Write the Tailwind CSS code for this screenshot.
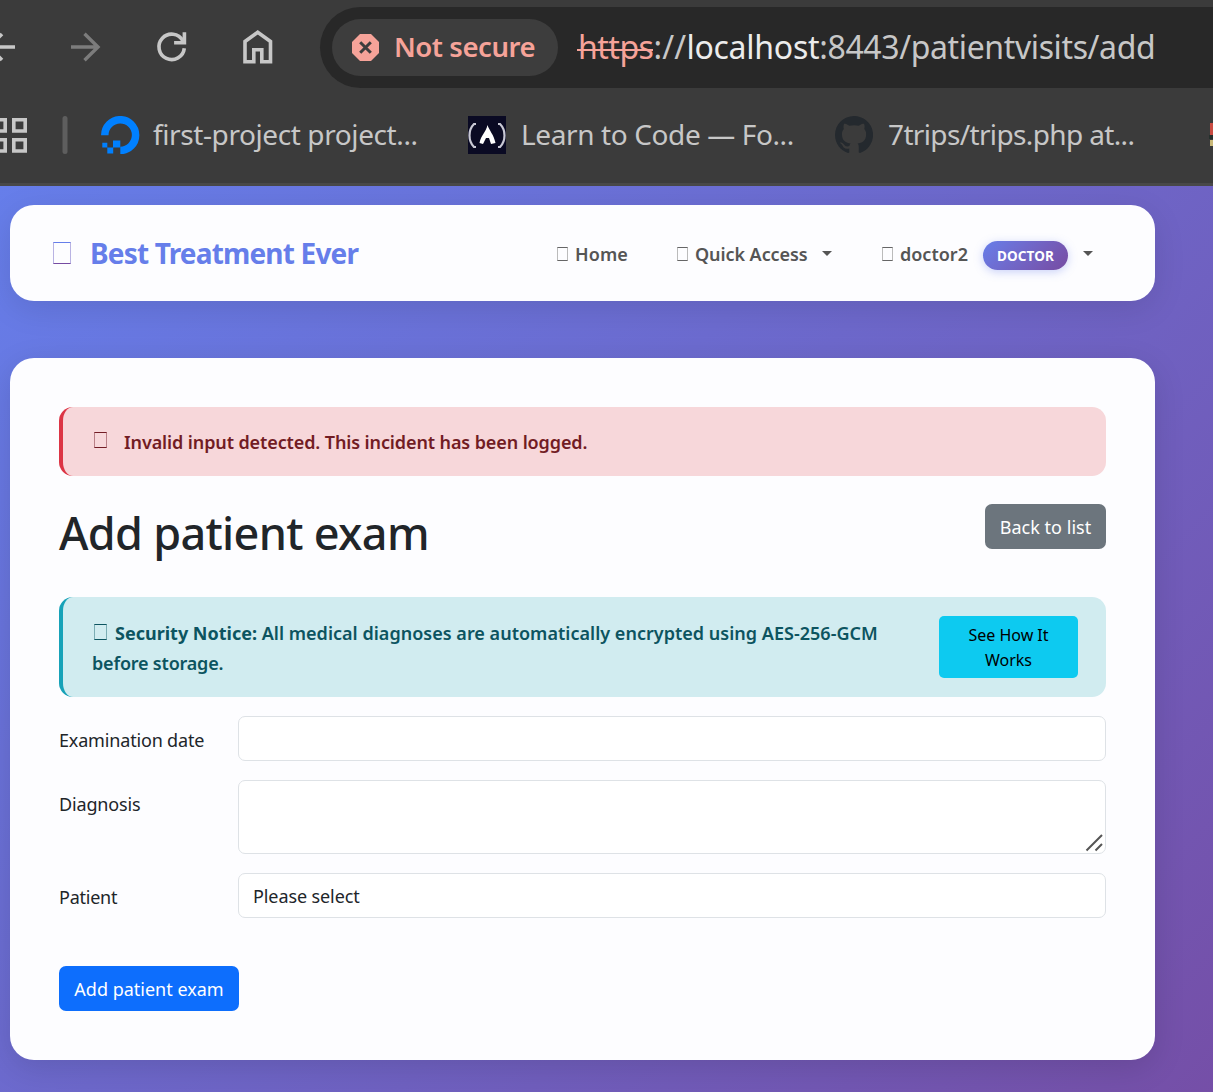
<!DOCTYPE html>
<html lang="en">
<head>
<meta charset="utf-8">
<title>Add patient exam</title>
<script src="https://cdn.jsdelivr.net/npm/@tailwindcss/browser@4"></script>
</head>
<body class="flex h-[1092px] w-[1213px] flex-col overflow-hidden whitespace-nowrap font-['Noto_Sans','Open_Sans',sans-serif] text-[18px] text-[#212529]">

<!-- Browser toolbar -->
<header class="h-[186px] shrink-0 overflow-hidden border-b-[3px] border-[#484848] bg-[#3b3b3b] text-[#c7c7c7]">
  <div class="flex h-[95px] pt-[7px]">
    <svg class="h-[81px] w-[320px] shrink-0" viewBox="0 7 320 81" fill="none" stroke="#c7c7c7" stroke-width="3.6">
      <path d="M-12 47H15M2 34l-13 13 13 13"/>
      <path stroke="#7c7c7c" stroke-width="3.4" d="M71 47h27M84.500 33.700L98 47 84.500 60.300"/>
      <path d="M184.300 48.200A12.700 12.700 0 1 1 182.800 40.700L184 42.500"/>
      <path stroke-width="3.600" d="M184.400 32.200v10.500h-10.300"/>
      <path d="M245 61.800V41.500L257.700 32.300 270.500 41.500V61.800H261.800V49.800H253.800V61.800Z"/>
    </svg>
    <div class="flex h-[81px] flex-1 items-center rounded-l-full bg-[#282828] pl-3">
      <div class="flex h-[57px] w-[226px] items-center rounded-full bg-[#3d3d3d] pl-5">
        <svg class="size-[27px]" viewBox="0 0 27 27"><path fill="#f6a399" d="M8 0H19L27 8V19L19 27H8L0 19V8Z"/><path d="M8.200 8.200l10.600 10.600M18.800 8.200L8.200 18.800" stroke="#3d3d3d" stroke-width="3"/></svg>
        <span class="relative -top-px ml-[15px] text-[27.5px] font-semibold tracking-[-0.45px] text-[#f6a399]">Not secure</span>
      </div>
      <div class="relative -top-px ml-5 flex text-[32px]">
        <span class="relative tracking-[-0.5px] text-[#f6a399]">https<i class="absolute -left-px right-0 top-[26px] h-[2px] bg-[#f6a399]"></i></span><span class="tracking-[0.2px]">://</span><span class="tracking-[-0.25px] text-[#ececec]">localhost</span><span class="tracking-[-0.38px]">:8443/patientvisits/add</span>
      </div>
    </div>
  </div>
  <div class="flex h-[80px] items-center text-[28px]">
    <svg class="h-[38px] w-[153px] shrink-0" viewBox="0 116 153 38">
      <path fill="none" stroke="#c7c7c7" stroke-width="3.600" d="M-6 119.800H5.200V131H-6ZM13.800 119.800H25.200V131H13.800ZM-6 139.800H5.200V151H-6ZM13.800 139.800H25.200V151H13.800Z"/>
      <rect x="62.500" y="116" width="5" height="38" rx="2.500" fill="#5e5e5e"/>
      <path fill="none" stroke="#0080ff" stroke-width="7.500" d="M104.800 135.300A15.400 15.400 0 1 1 120.300 150.500"/>
      <path fill="#0080ff" d="M113 140.500h7.300v7H113ZM107.300 147.500h5.900v6h-5.900ZM102.300 142.800h5v4.700h-5Z"/>
    </svg>
    <span class="relative -top-px w-[315px] tracking-[-0.4px]">first-project project...</span>
    <svg class="size-[38px] shrink-0" viewBox="0 0 38 38" fill="none" stroke="#c8c8d4"><path fill="#0a0a23" stroke="none" d="M0 0h38v38H0z"/><path stroke-width="2.200" d="M8 8H6C0 14 0 25 6 31H8M30 8H32C38 14 38 25 32 31H30"/><path fill="#fff" stroke="none" d="M19.500 9C21 14 26 19 27.500 27L23 28 21 22H18L15 28 11.500 27C13 19 18 16 19.500 9Z"/></svg>
    <span class="relative -top-px ml-[15px] w-[314px] tracking-[-0.38px]">Learn to Code — Fo...</span>
    <svg class="size-[38px] shrink-0" viewBox="0 0 16 16"><path fill="#24292e" d="M8 0C3.580 0 0 3.580 0 8c0 3.540 2.290 6.530 5.470 7.590.4.070.55-.17.55-.38 0-.19-.01-.82-.01-1.490-2.010.37-2.530-.49-2.690-.94-.09-.23-.48-.94-.82-1.130-.28-.15-.68-.52-.01-.53.63-.01 1.080.58 1.230.82.72 1.210 1.870.87 2.330.66.070-.52.28-.87.51-1.070-1.780-.2-3.640-.89-3.640-3.950 0-.87.31-1.590.82-2.150-.08-.2-.36-1.020.08-2.120 0 0 .67-.21 2.200.82.64-.18 1.320-.27 2-.27s1.360.09 2 .27c1.530-1.040 2.200-.82 2.200-.82.44 1.100.16 1.920.08 2.120.51.56.82 1.270.82 2.150 0 3.070-1.870 3.750-3.650 3.950.29.25.54.73.54 1.480 0 1.070-.01 1.930-.01 2.200 0 .21.15.46.55.38A8 8 0 0 0 8 0Z"/></svg>
    <span class="relative -top-px ml-[15px] w-[320px] shrink-0 tracking-[-0.64px]">7trips/trips.php at...</span>
    <svg class="h-[38px] w-[5px] shrink-0" viewBox="0 0 5 38"><path fill="#c94c42" d="M2 7h3v12H2z"/><path fill="#25302d" d="M1 19h4v4H1z"/><path fill="#c9b878" d="M2 24h3v6H2z"/></svg>
  </div>
</header>

<!-- Page -->
<main class="flex-1 bg-[linear-gradient(135deg,#667eea_0%,#764ba2_108%)] pl-[10px] pt-[19px]">
  <nav class="flex h-[96px] w-[1145px] items-center rounded-3xl bg-[#fdfdff] pl-[43px] font-semibold text-[#555] shadow-[0_8px_32px_rgba(0,0,0,0.1)]">
    <i class="relative h-[22px] w-[18px] border border-x-[#b9b3e3] border-t-[#667eea] border-b-[#764ba2]"></i>
    <span class="ml-[19px] w-[467px] text-[28px] font-bold tracking-[-0.82px] text-[#667eea]">Best Treatment Ever</span>
    <i class="relative top-px h-[14px] w-[11px] border border-x-[#bbb] border-y-[#666]"></i>
    <span class="relative top-px ml-[7px] w-[102px] tracking-[0.1px]">Home</span>
    <i class="relative top-px h-[14px] w-[11px] border border-x-[#bbb] border-y-[#666]"></i>
    <span class="relative top-px ml-[7px] w-[127px] tracking-[-0.07px]">Quick Access</span>
    <svg class="h-[5px] w-[10px]" viewBox="0 0 10 5"><path fill="#555" d="M0 0h10L5 5z"/></svg>
    <i class="relative top-px ml-[50px] h-[14px] w-[11px] border border-x-[#bbb] border-y-[#666]"></i>
    <span class="relative top-px ml-[7px] w-[83px]">doctor2</span>
    <span class="relative top-[2px] flex h-[29px] w-[85px] items-center justify-center rounded-full bg-linear-135 from-[#667eea] to-[#764ba2] pt-[2px] text-[13.5px] font-bold tracking-[0.15px] text-white shadow-[0_2px_10px_rgba(102,126,234,0.35)]">DOCTOR</span>
    <svg class="ml-[15px] h-[5px] w-[10px]" viewBox="0 0 10 5"><path fill="#555" d="M0 0h10L5 5z"/></svg>
  </nav>

  <section class="mt-[57px] h-[702px] w-[1145px] rounded-3xl bg-[#fdfdff] px-[49px] pt-[49px] shadow-[0_8px_32px_rgba(0,0,0,0.12)]">
    <div class="flex h-[69px] items-center rounded-[14px] border-l-4 border-[#dc3545] bg-[#f7d7da] pl-[31px] font-semibold text-[#721c24]">
      <i class="relative -top-[2px] h-[16px] w-[13px] border border-x-[#b98087] border-y-[#721c24]"></i>
      <span class="relative top-px ml-[17px] tracking-[-0.11px]">Invalid input detected. This incident has been logged.</span>
    </div>

    <div class="mt-7 flex justify-between">
      <h1 class="text-[45px] font-medium leading-[58px] tracking-[-0.68px]">Add patient exam</h1>
      <button class="h-[45px] w-[121px] rounded-[7px] bg-[#6c757d] pt-[2px] tracking-[0.02px] text-white">Back to list</button>
    </div>

    <div class="mt-[35px] flex h-[100px] items-center rounded-[14px] border-l-4 border-[#17a2b8] bg-[#d1ecf0] pl-[29px] pr-7 font-semibold leading-[30px] text-[#0c5460]">
      <p class="relative top-px flex-1"><i class="relative mr-[8px] ml-[2px] inline-block h-[16px] w-[13px] border border-x-[#7badb4] border-y-[#0c5460]"></i><b class="font-bold">Security Notice:</b> <span class="tracking-[0.02px]">All medical diagnoses are automatically encrypted using AES-256-GCM</span><br><span class="tracking-[-0.2px]">before storage.</span></p>
      <button class="h-[62px] w-[139px] rounded-[5px] bg-[#0dcaf0] pt-[2px] text-[16px] font-normal leading-[25px] text-black">See How It<br>Works</button>
    </div>

    <form class="mt-[19px] grid grid-cols-[179px_1fr] gap-y-[19px]">
      <label class="pt-px leading-[44px] tracking-[-0.17px]"><span class="relative top-px">Examination date</span></label>
      <div class="h-[45px] rounded-[7px] border border-[#dee2e6] bg-white"></div>
      <label class="leading-[48px] tracking-[-0.15px]">Diagnosis</label>
      <div class="flex h-[74px] items-end justify-end rounded-[7px] border border-[#dee2e6] bg-white pr-[2px] pb-px">
        <svg class="size-[18px]" viewBox="0 0 18 18" fill="none" stroke="#555" stroke-width="2"><path d="M1.500 16.500L17 1M10.500 16.500L17 10"/></svg>
      </div>
      <label class="pt-px leading-[44px] tracking-[-0.25px]"><span class="relative top-px">Patient</span></label>
      <div class="h-[45px] rounded-[7px] border border-[#dee2e6] bg-white pl-[14px] leading-[44px] tracking-[-0.1px]">Please select</div>
    </form>
    <button class="mt-12 h-[45px] w-[180px] rounded-[7px] bg-[#0d6efd] pt-px text-white">Add patient exam</button>
  </section>
</main>
</body>
</html>
